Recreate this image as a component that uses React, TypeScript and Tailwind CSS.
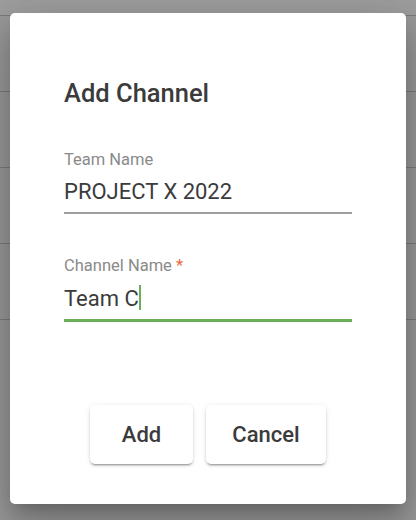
import React from "react";

const btn =
  "h-[59px] rounded-[5px] bg-white text-[22px] leading-none font-medium text-[#3b3b3b] shadow-[0_3px_1px_-2px_rgba(0,0,0,0.2),0_2px_2px_0_rgba(0,0,0,0.14),0_1px_5px_0_rgba(0,0,0,0.12)]";

export default function App() {
  return (
    <div className="relative w-[416px] h-[520px] overflow-hidden bg-[#999999] font-[Roboto,'Noto_Sans',sans-serif]">
      <div className="flex flex-col">
        <div className="h-[16px] border-b border-[#7b7b7b] bg-[#9e9e9e]" />
        <div className="h-[76px] border-b border-[#7b7b7b]" />
        <div className="h-[76px] border-b border-[#7b7b7b]" />
        <div className="h-[76px] border-b border-[#7b7b7b]" />
        <div className="h-[76px] border-b border-[#7b7b7b]" />
      </div>

      <div className="absolute left-[10px] top-[13px] w-[396px] h-[491px] rounded-[5px] bg-white shadow-[0_11px_15px_-7px_rgba(0,0,0,0.2),0_24px_38px_3px_rgba(0,0,0,0.14),0_9px_46px_8px_rgba(0,0,0,0.12)] flex flex-col">
        <div className="px-[54px] pt-[65px]">
          <h2 className="text-[25.5px] leading-[30px] font-medium text-[#3b3b3b]">Add Channel</h2>

          <div className="mt-[41.5px]">
            <div className="text-[16.5px] leading-[20px] text-[#8a8a8a]">Team Name</div>
            <div className="mt-[8px] pb-[6.5px] border-b-2 border-[#9e9e9e] text-[22px] leading-[28px] text-[#3b3b3b]">
              PROJECT X 2022
            </div>
          </div>

          <div className="mt-[41.5px]">
            <div className="text-[16.5px] leading-[20px] text-[#8a8a8a]">
              Channel Name <span className="text-[#ea6a3f]">*</span>
            </div>
            <div className="mt-[9px] pb-[6.5px] border-b-[3px] border-[#6aae5a] text-[22px] leading-[28px] text-[#3b3b3b] flex items-start">
              <span>Team C</span>
              <span className="w-[2px] h-[25px] bg-[#6aae5a]" />
            </div>
          </div>
        </div>

        <div className="mt-auto mb-[40px] flex justify-center gap-[13px]">
          <button className={`w-[103px] ${btn}`}>Add</button>
          <button className={`w-[120px] ${btn}`}>Cancel</button>
        </div>
      </div>
    </div>
  );
}
